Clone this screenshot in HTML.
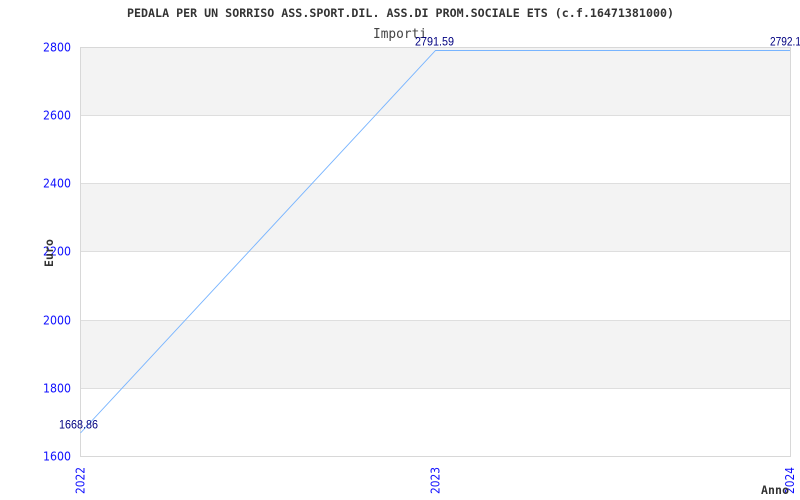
<!DOCTYPE html>
<html><head><meta charset="utf-8"><style>
html,body{margin:0;padding:0;background:#fff;width:800px;height:500px;overflow:hidden}
svg{display:block}
.y{font:12px "DejaVu Sans",sans-serif;fill:#1010ff}
.v{font:12px "Liberation Sans",sans-serif;fill:#000080}
</style></head><body>
<svg width="800" height="500" viewBox="0 0 800 500" xmlns="http://www.w3.org/2000/svg">
<rect x="80.5" y="47.5" width="710" height="409" fill="#fff" stroke="#d8d8d8"/>
<g fill="#f3f3f3">
<rect x="81" y="48" width="709" height="67"/>
<rect x="81" y="184" width="709" height="67"/>
<rect x="81" y="321" width="709" height="67"/>
</g>
<g stroke="#dedede" shape-rendering="crispEdges">
<line x1="81" x2="790" y1="115.5" y2="115.5"/>
<line x1="81" x2="790" y1="183.5" y2="183.5"/>
<line x1="81" x2="790" y1="251.5" y2="251.5"/>
<line x1="81" x2="790" y1="320.5" y2="320.5"/>
<line x1="81" x2="790" y1="388.5" y2="388.5"/>
</g>
<polyline points="80.5,433 435.5,50.5 790,50.5" fill="none" stroke="#77b4ff" stroke-width="0.9"/>
<text x="127" y="17" font-family="'DejaVu Sans Mono','Liberation Mono',monospace" font-weight="bold" font-size="11.5" fill="#333" textLength="547" lengthAdjust="spacingAndGlyphs">PEDALA PER UN SORRISO ASS.SPORT.DIL. ASS.DI PROM.SOCIALE ETS (c.f.16471381000)</text>
<text x="373" y="38" font-family="'DejaVu Sans Mono','Liberation Mono',monospace" font-size="13" fill="#444" textLength="54" lengthAdjust="spacingAndGlyphs">Importi</text>
<g class="y">
<text x="43" y="51.5" textLength="28" lengthAdjust="spacingAndGlyphs">2800</text>
<text x="43" y="119.5" textLength="28" lengthAdjust="spacingAndGlyphs">2600</text>
<text x="43" y="187.5" textLength="28" lengthAdjust="spacingAndGlyphs">2400</text>
<text x="43" y="255.5" textLength="28" lengthAdjust="spacingAndGlyphs">2200</text>
<text x="43" y="324.5" textLength="28" lengthAdjust="spacingAndGlyphs">2000</text>
<text x="43" y="392.5" textLength="28" lengthAdjust="spacingAndGlyphs">1800</text>
<text x="43" y="460.5" textLength="28" lengthAdjust="spacingAndGlyphs">1600</text>
</g>
<g class="y">
<text transform="translate(84.5,494) rotate(-90)" textLength="27" lengthAdjust="spacingAndGlyphs">2022</text>
<text transform="translate(439.5,494) rotate(-90)" textLength="27" lengthAdjust="spacingAndGlyphs">2023</text>
<text transform="translate(794,494) rotate(-90)" textLength="27" lengthAdjust="spacingAndGlyphs">2024</text>
</g>
<g class="v">
<text x="59" y="428.5" textLength="39" lengthAdjust="spacingAndGlyphs">1668.86</text>
<text x="415" y="45.5" textLength="39" lengthAdjust="spacingAndGlyphs">2791.59</text>
<text x="770" y="45.5" textLength="31" lengthAdjust="spacingAndGlyphs">2792.1</text>
</g>
<text transform="translate(53,267) rotate(-90)" font-family="'DejaVu Sans Mono','Liberation Mono',monospace" font-weight="bold" font-size="11.5" fill="#333" textLength="28">Euro</text>
<text x="761" y="494" font-family="'DejaVu Sans Mono','Liberation Mono',monospace" font-weight="bold" font-size="11.5" fill="#333" textLength="28">Anno</text>
</svg>
</body></html>
